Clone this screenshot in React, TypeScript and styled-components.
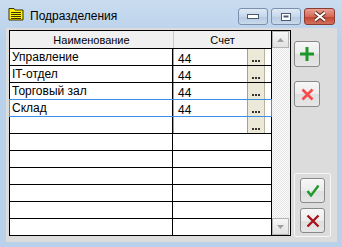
import React from "react";
import styled, { createGlobalStyle } from "styled-components";

const GlobalStyle = createGlobalStyle`
  html, body {
    margin: 0;
    padding: 0;
    background: #bcd4ec;
  }
  * {
    box-sizing: border-box;
  }
`;

const Window = styled.div`
  width: 342px;
  height: 247px;
  display: flex;
  flex-direction: column;
  background: linear-gradient(#c9dcf0, #b9d1ea 40px);
  font-family: "Liberation Sans", Arial, sans-serif;
  overflow: hidden;
`;

const TitleBar = styled.div`
  height: 28px;
  display: flex;
  align-items: center;
  padding: 0 7px 0 8px;
`;

const TitleText = styled.span`
  margin-left: 6px;
  font-size: 12px;
  color: #000;
  flex: 1;
  padding-top: 3px;
`;

const CaptionGroup = styled.div`
  display: flex;
  gap: 3px;
  align-self: flex-start;
  margin-top: 8px;
`;

const CaptionButton = styled.div<{ $close?: boolean }>`
  width: ${(p) => (p.$close ? 31 : 30)}px;
  height: 17px;
  border: 1px solid ${(p) => (p.$close ? "#8d3b30" : "#7a90ae")};
  border-radius: 3px;
  display: flex;
  align-items: center;
  justify-content: center;
  background: ${(p) =>
    p.$close
      ? "linear-gradient(#e8a093, #d46a58 50%, #c4432e 51%, #d0705c)"
      : "linear-gradient(#dfe9f5, #c6d7ea 50%, #b5c9e0 51%, #c9daec)"};
`;

const Client = styled.div`
  flex: 1;
  margin: 0 5px 5px 6px;
  background: #dcdcdc;
  display: flex;
  padding: 2px 0 0 3px;
`;

const Grid = styled.div`
  width: 282px;
  height: 206px;
  border: 1px solid #000;
  background: #fff;
  display: flex;
`;

const Table = styled.div`
  width: 262px;
  display: flex;
  flex-direction: column;
  border-right: 1px solid #000;
`;

const HeaderRow = styled.div`
  height: 18px;
  display: flex;
  background: #f0f0f0;
  border-bottom: 1px solid #000;
  font-size: 11px;
  color: #000;
`;

const HeaderCell = styled.div<{ $w: number }>`
  width: ${(p) => p.$w}px;
  display: flex;
  align-items: center;
  justify-content: center;
  border-right: 1px solid #c8c8c8;
  &:last-child {
    border-right: none;
    flex: 1;
  }
`;

const Row = styled.div<{ $selected?: boolean }>`
  height: 17px;
  display: flex;
  border-bottom: 1px solid #000;
  position: relative;
  &:last-child {
    border-bottom: none;
    height: 16px;
  }
  &::after {
    content: "";
    display: ${(p) => (p.$selected ? "block" : "none")};
    position: absolute;
    left: -1px;
    right: -1px;
    top: -1px;
    bottom: -1px;
    border: 1px solid #3a8ee6;
    pointer-events: none;
  }
`;

const NameCell = styled.div`
  width: 163px;
  border-right: 1px solid #000;
  font-size: 12px;
  line-height: 16px;
  padding-left: 2px;
  color: #000;
  white-space: nowrap;
  overflow: hidden;
`;

const AccountCell = styled.div`
  flex: 1;
  display: flex;
  padding-right: 4px;
`;

const AccountInput = styled.div`
  width: 75px;
  border-left: 1px solid #a0a0a0;
  border-right: 1px solid #a0a0a0;
  font-size: 12px;
  line-height: 12px;
  padding: 4px 0 0 4px;
  color: #000;
`;

const EllipsisButton = styled.div`
  width: 17px;
  background: #ece9d8;
  border-right: 1px solid #b8b4a0;
  display: flex;
  align-items: flex-end;
  justify-content: center;
  padding-bottom: 3px;
`;

const Dot = styled.span`
  width: 2px;
  height: 2px;
  margin: 0 1px 0 0;
  background: #333;
  &:last-child {
    margin-right: 0;
  }
`;

const Scrollbar = styled.div`
  flex: 1;
  display: flex;
  flex-direction: column;
  justify-content: space-between;
  background-color: #f6f6f6;
  background-image: repeating-conic-gradient(#e6e6e6 0 25%, #fbfbfb 0 50%);
  background-size: 2px 2px;
`;

const ScrollArrow = styled.div`
  width: 17px;
  height: 17px;
  border: 1px solid #b4b4b4;
  background: linear-gradient(#f6f6f6, #e2e2e2);
  display: flex;
  align-items: center;
  justify-content: center;
`;

const SidePanel = styled.div`
  flex: 1;
  display: flex;
  flex-direction: column;
  align-items: flex-start;
  padding: 11px 0 5px 3px;
  gap: 14px;
`;

const ToolButton = styled.div<{ $size: number }>`
  width: ${(p) => p.$size}px;
  height: ${(p) => p.$size}px;
  border: 1px solid #8a8a8a;
  border-radius: 3px;
  background: linear-gradient(#f7f7f7, #ececec 50%, #dedede 51%, #e6e6e6);
  display: flex;
  align-items: center;
  justify-content: center;
`;

const ConfirmGroup = styled.div`
  margin-top: auto;
  width: 37px;
  height: 64px;
  border: 1px solid #f7f7f7;
  border-radius: 2px;
  display: flex;
  flex-direction: column;
  align-items: center;
  padding-top: 4px;
  gap: 5px;
`;

const rows = [
  { name: "Управление", account: "44" },
  { name: "IT-отдел", account: "44" },
  { name: "Торговый зал", account: "44" },
  { name: "Склад", account: "44", selected: true },
  { name: "", account: "", button: true },
  ...Array.from({ length: 6 }, () => ({ name: "", account: "" })),
] as { name: string; account: string; selected?: boolean; button?: boolean }[];

function FolderIcon() {
  return (
    <svg width="16" height="14" viewBox="0 0 16 14">
      <path d="M1 1.5h5l1 1.5h8v10H1z" fill="#fff200" stroke="#3a3000" strokeWidth="1" />
      <path d="M3 5.5h10M3 7.5h10M3 9.5h10M3 11.5h10" stroke="#3a3000" strokeWidth="1" />
    </svg>
  );
}

function Triangle({ down }: { down?: boolean }) {
  return (
    <svg width="7" height="4" viewBox="0 0 7 4">
      <path d={down ? "M0 0h7L3.5 4z" : "M0 4h7L3.5 0z"} fill="#a0a0a0" />
    </svg>
  );
}

export default function App() {
  return (
    <>
      <GlobalStyle />
      <Window>
        <TitleBar>
          <FolderIcon />
          <TitleText>Подразделения</TitleText>
          <CaptionGroup>
            <CaptionButton>
              <svg width="12" height="5" viewBox="0 0 12 5">
                <rect x="0.5" y="0.5" width="11" height="4" fill="#fff" stroke="#4a5a70" />
              </svg>
            </CaptionButton>
            <CaptionButton>
              <svg width="10" height="8" viewBox="0 0 10 8">
                <rect x="0.5" y="0.5" width="9" height="7" fill="#fff" stroke="#4a5a70" />
                <rect x="2.5" y="2.5" width="5" height="2" fill="#4a5a70" />
              </svg>
            </CaptionButton>
            <CaptionButton $close>
              <svg width="14" height="11" viewBox="0 0 14 11">
                <path d="M2 1.5L12 9.5M12 1.5L2 9.5" stroke="#5a2a20" strokeWidth="4" />
                <path d="M2 1.5L12 9.5M12 1.5L2 9.5" stroke="#fff" strokeWidth="2.2" />
              </svg>
            </CaptionButton>
          </CaptionGroup>
        </TitleBar>
        <Client>
          <Grid>
            <Table>
              <HeaderRow>
                <HeaderCell $w={164}>Наименование</HeaderCell>
                <HeaderCell $w={97}>Счет</HeaderCell>
              </HeaderRow>
              {rows.map((r, i) => (
                <Row key={i} $selected={r.selected}>
                  <NameCell>{r.name}</NameCell>
                  {r.account || r.button ? (
                    <AccountCell>
                      <AccountInput>{r.account}</AccountInput>
                      <EllipsisButton>
                        <Dot />
                        <Dot />
                        <Dot />
                      </EllipsisButton>
                    </AccountCell>
                  ) : (
                    <AccountCell />
                  )}
                </Row>
              ))}
            </Table>
            <Scrollbar>
              <ScrollArrow>
                <Triangle />
              </ScrollArrow>
              <ScrollArrow>
                <Triangle down />
              </ScrollArrow>
            </Scrollbar>
          </Grid>
          <SidePanel>
            <ToolButton $size={26}>
              <svg width="16" height="16" viewBox="0 0 16 16">
                <path d="M8 1v14M1 8h14" stroke="#1e962a" strokeWidth="3" />
              </svg>
            </ToolButton>
            <ToolButton $size={26}>
              <svg width="13" height="13" viewBox="0 0 13 13">
                <path d="M1.5 1.5l10 10M11.5 1.5l-10 10" stroke="#f84a4a" strokeWidth="2.6" />
              </svg>
            </ToolButton>
            <ConfirmGroup>
              <ToolButton $size={25}>
                <svg width="14" height="13" viewBox="0 0 14 13">
                  <path d="M1.5 7l3.5 4.5L12.5 1.5" fill="none" stroke="#1f9a2c" strokeWidth="2.4" />
                </svg>
              </ToolButton>
              <ToolButton $size={25}>
                <svg width="14" height="14" viewBox="0 0 14 14">
                  <path d="M1.5 1.5l11 11M12.5 1.5l-11 11" stroke="#a8141c" strokeWidth="2.4" />
                </svg>
              </ToolButton>
            </ConfirmGroup>
          </SidePanel>
        </Client>
      </Window>
    </>
  );
}
